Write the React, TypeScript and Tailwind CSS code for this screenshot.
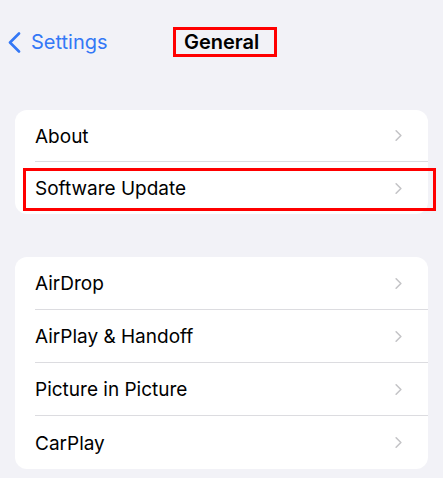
import { ChevronRight } from 'lucide-react'

function Row({ label, last, highlight, tall }: { label: string; last?: boolean; highlight?: boolean; tall?: boolean }) {
  return (
    <div className={`relative flex items-center pl-5 ${tall ? 'h-[53px]' : 'h-[52px]'}`}>
      <div className={`flex-1 h-full flex items-center pr-[20px] ${last ? '' : 'border-b border-[#dcdce0]'}`}>
        <span className="flex-1 text-[19px] text-black pt-[3px]">{label}</span>
        <ChevronRight className="w-[19px] h-[19px] text-[#c4c4c7]" strokeWidth={2} />
      </div>
      {highlight && (
        <div className="absolute left-[8px] right-[-8px] top-[6px] bottom-[3px] border-[3px] border-[#ff0000]" />
      )}
    </div>
  )
}

export default function App() {
  return (
    <div className="w-[443px] h-[478px] bg-[#f2f2f7] overflow-hidden" style={{ fontFamily: 'Inter, "Liberation Sans", sans-serif' }}>
      <div className="h-[84px] flex items-center relative">
        <div className="flex items-center pl-[8px] text-[#3478f6]">
          <svg width="13" height="21" viewBox="0 0 13 21" fill="none">
            <path d="M11 1.5 L2 10.5 L11 19.5" stroke="currentColor" strokeWidth="2.6" strokeLinecap="round" strokeLinejoin="round" />
          </svg>
          <span className="text-[20px] ml-[10px]">Settings</span>
        </div>
        <div className="absolute left-[173px] top-[27px] w-[104px] h-[30px] border-[3px] border-[#ff0000] flex items-center pl-[8px]">
          <span className="text-[20px] font-semibold text-black">General</span>
        </div>
      </div>
      <div className="px-[15px] pt-[26px]">
        <div className="bg-white rounded-[12px]">
          <Row label="About" />
          <Row label="Software Update" last highlight />
        </div>
        <div className="bg-white rounded-[12px] mt-[43px]">
          <Row label="AirDrop" tall />
          <Row label="AirPlay & Handoff" tall />
          <Row label="Picture in Picture" tall />
          <Row label="CarPlay" last tall />
        </div>
      </div>
    </div>
  )
}
